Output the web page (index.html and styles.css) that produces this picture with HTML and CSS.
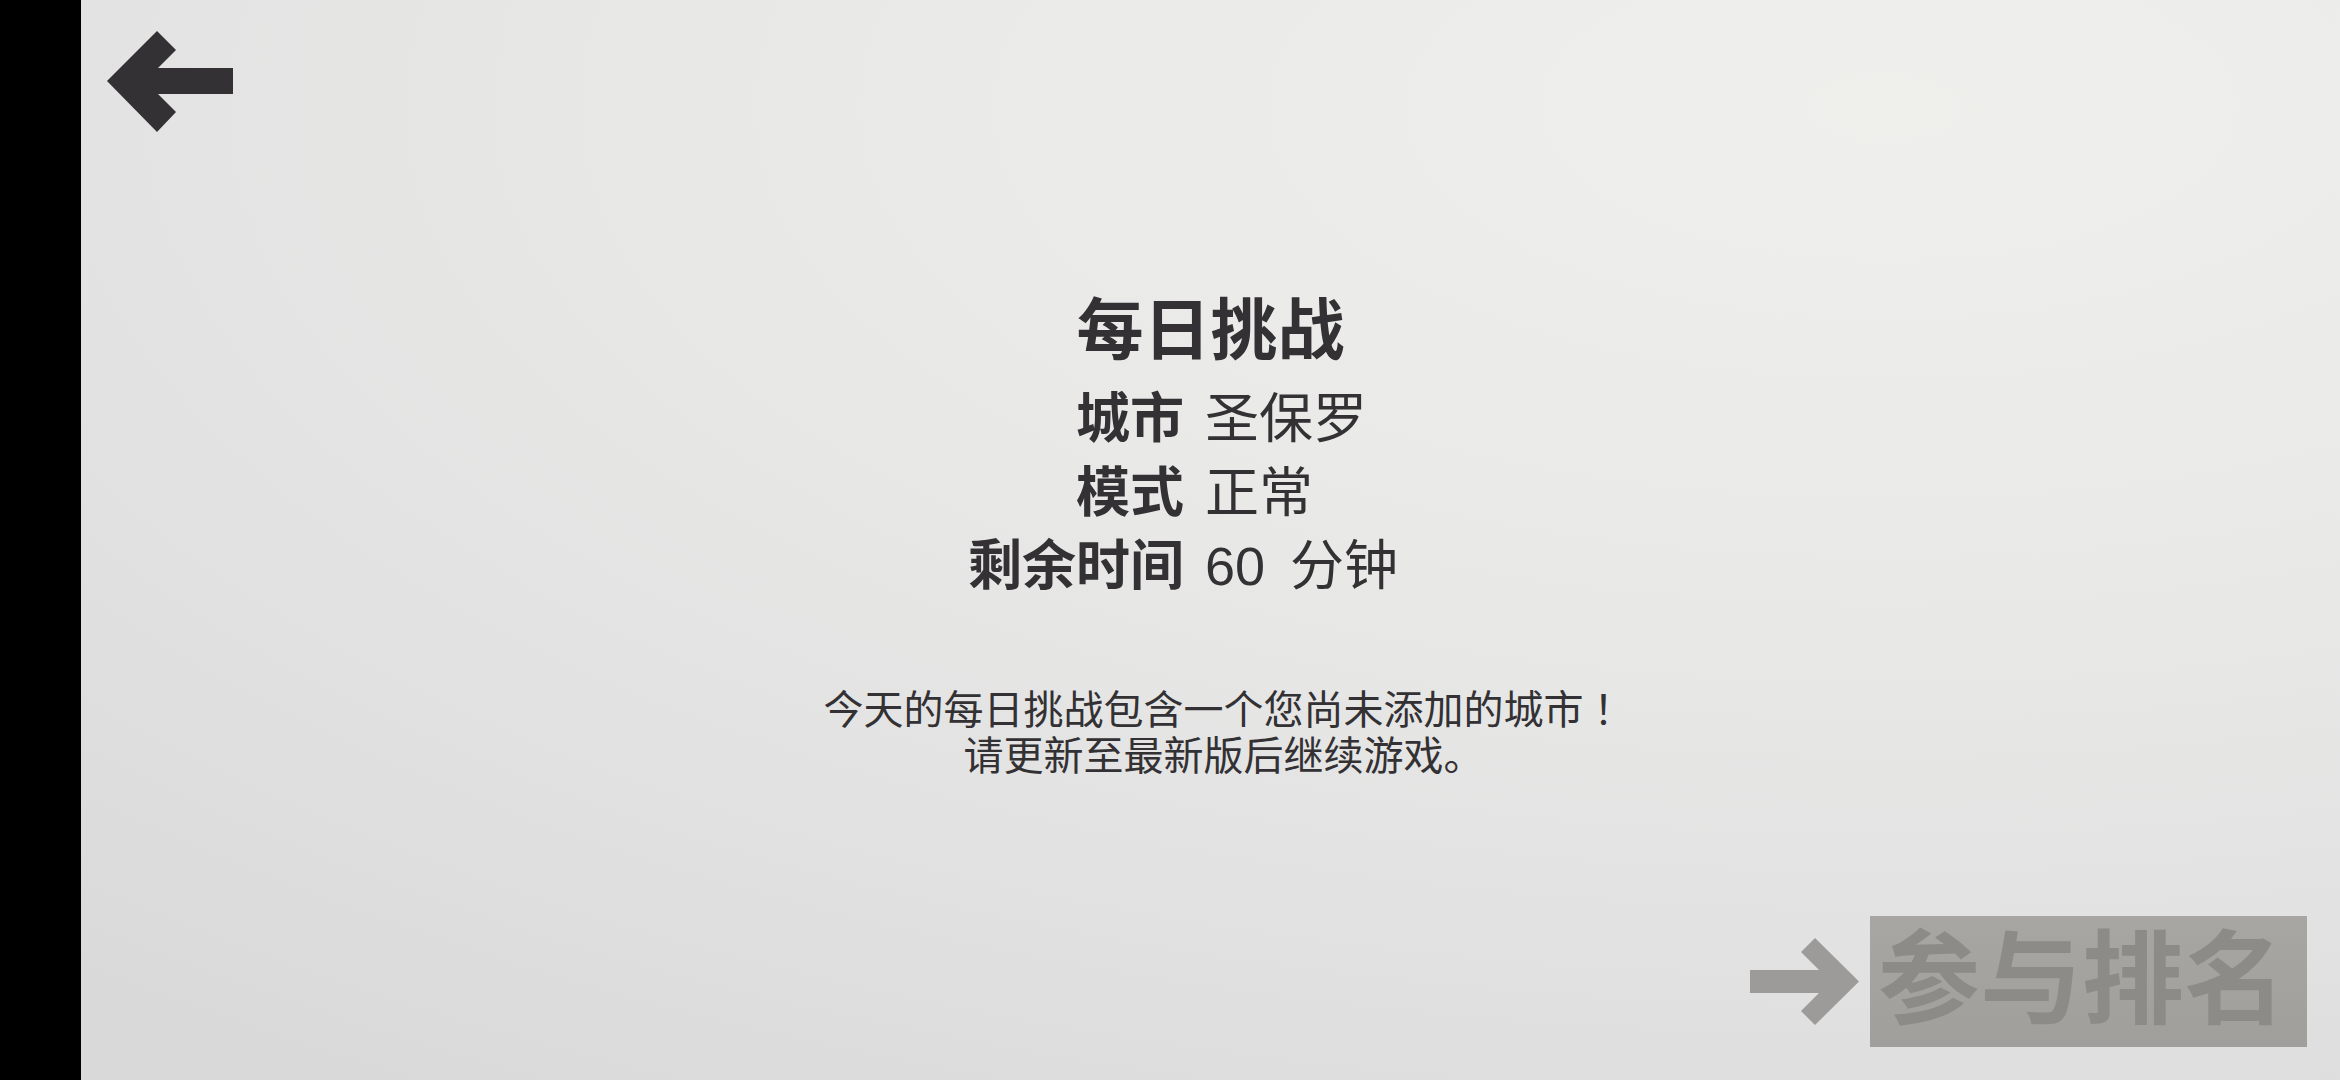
FILE: index.html
```html
<!DOCTYPE html>
<html lang="zh-CN">
<head>
<meta charset="utf-8">
<title>每日挑战</title>
<link rel="stylesheet" href="styles.css">
</head>
<body>
<div class="screen">
  <div class="sidebar"></div>
  <main class="main">
    <header class="header">
      <svg class="back" width="126" height="101" viewBox="0 0 126 101" aria-label="返回">
        <polygon points="0,50 50,0 69,19 51,37 126,37 126,63 51,63 69,81 50,101" fill="#333133"/>
      </svg>
    </header>
    <section class="content">
      <h1 class="title">每日挑战</h1>
      <div class="info">
        <div class="label">城市</div><div class="value">圣保罗</div>
        <div class="label">模式</div><div class="value">正常</div>
        <div class="label">剩余时间</div><div class="value"><span class="num">60 </span>分钟</div>
      </div>
      <p class="desc">今天的每日挑战包含一个您尚未添加的城市<span class="fw" lang="ja">！</span><br>请更新至最新版后继续游戏。</p>
    </section>
    <footer class="footer">
      <svg class="go" width="109" height="87" viewBox="0 0 109 87" aria-hidden="true">
        <polygon points="109,43.5 65,0 51,14 69,32 0,32 0,55 69,55 51,73 65,87" fill="#9c9b99"/>
      </svg>
      <div class="rank">参与排名</div>
    </footer>
  </main>
</div>
</body>
</html>
```

FILE: styles.css
```css
html, body {
  margin: 0;
  padding: 0;
  width: 2340px;
  height: 1080px;
  overflow: hidden;
}

body {
  font-family: "Noto Sans CJK SC", "Noto Sans", sans-serif;
  color: #333133;
}

.screen {
  display: flex;
  width: 2340px;
  height: 1080px;
}

.sidebar {
  width: 81px;
  flex: 0 0 81px;
  background: #000;
}

.main {
  flex: 1;
  display: flex;
  flex-direction: column;
  background: radial-gradient(ellipse 120% 110% at 80% 10%, #efefec 0%, #e9e9e8 40%, #e2e2e2 70%, #d9d9d9 100%);
}

.header {
  padding: 31px 0 0 26px;
  height: 101px;
}

.back {
  display: block;
}

.content {
  margin-top: 159px;
  display: flex;
  flex-direction: column;
}

.title {
  margin: 0;
  font-size: 67px;
  line-height: 67px;
  font-weight: 700;
  text-align: center;
}

.info {
  margin-top: 20px;
  display: grid;
  grid-template-columns: 1fr 1fr;
  column-gap: 21px;
  padding-right: 32px;
  font-size: 54px;
  line-height: 73.5px;
}

.label {
  text-align: right;
  font-weight: 700;
}

.value {
  text-align: left;
  font-weight: 400;
}

.num {
  font-family: "Liberation Sans", "Noto Sans CJK SC", sans-serif;
  word-spacing: 10px;
}

.desc {
  margin: 80px 0 0;
  padding-left: 26px;
  font-size: 40px;
  line-height: 46px;
  text-align: center;
  font-weight: 400;
}

.fw {
  font-family: "Noto Sans CJK JP", "Noto Sans CJK TC", sans-serif;
}

.footer {
  margin-top: auto;
  display: flex;
  justify-content: flex-end;
  align-items: center;
  gap: 11px;
  padding: 0 33px 33px 0;
}

.go {
  display: block;
}

.rank {
  width: 437px;
  height: 131px;
  box-sizing: border-box;
  padding: 0 0 20px 8px;
  font-size: 102px;
  line-height: 111px;
  font-weight: 700;
  color: #8c8b88;
  background: linear-gradient(180deg, #a7a6a3 0%, #a09f9c 100%);
  white-space: nowrap;
}
```
